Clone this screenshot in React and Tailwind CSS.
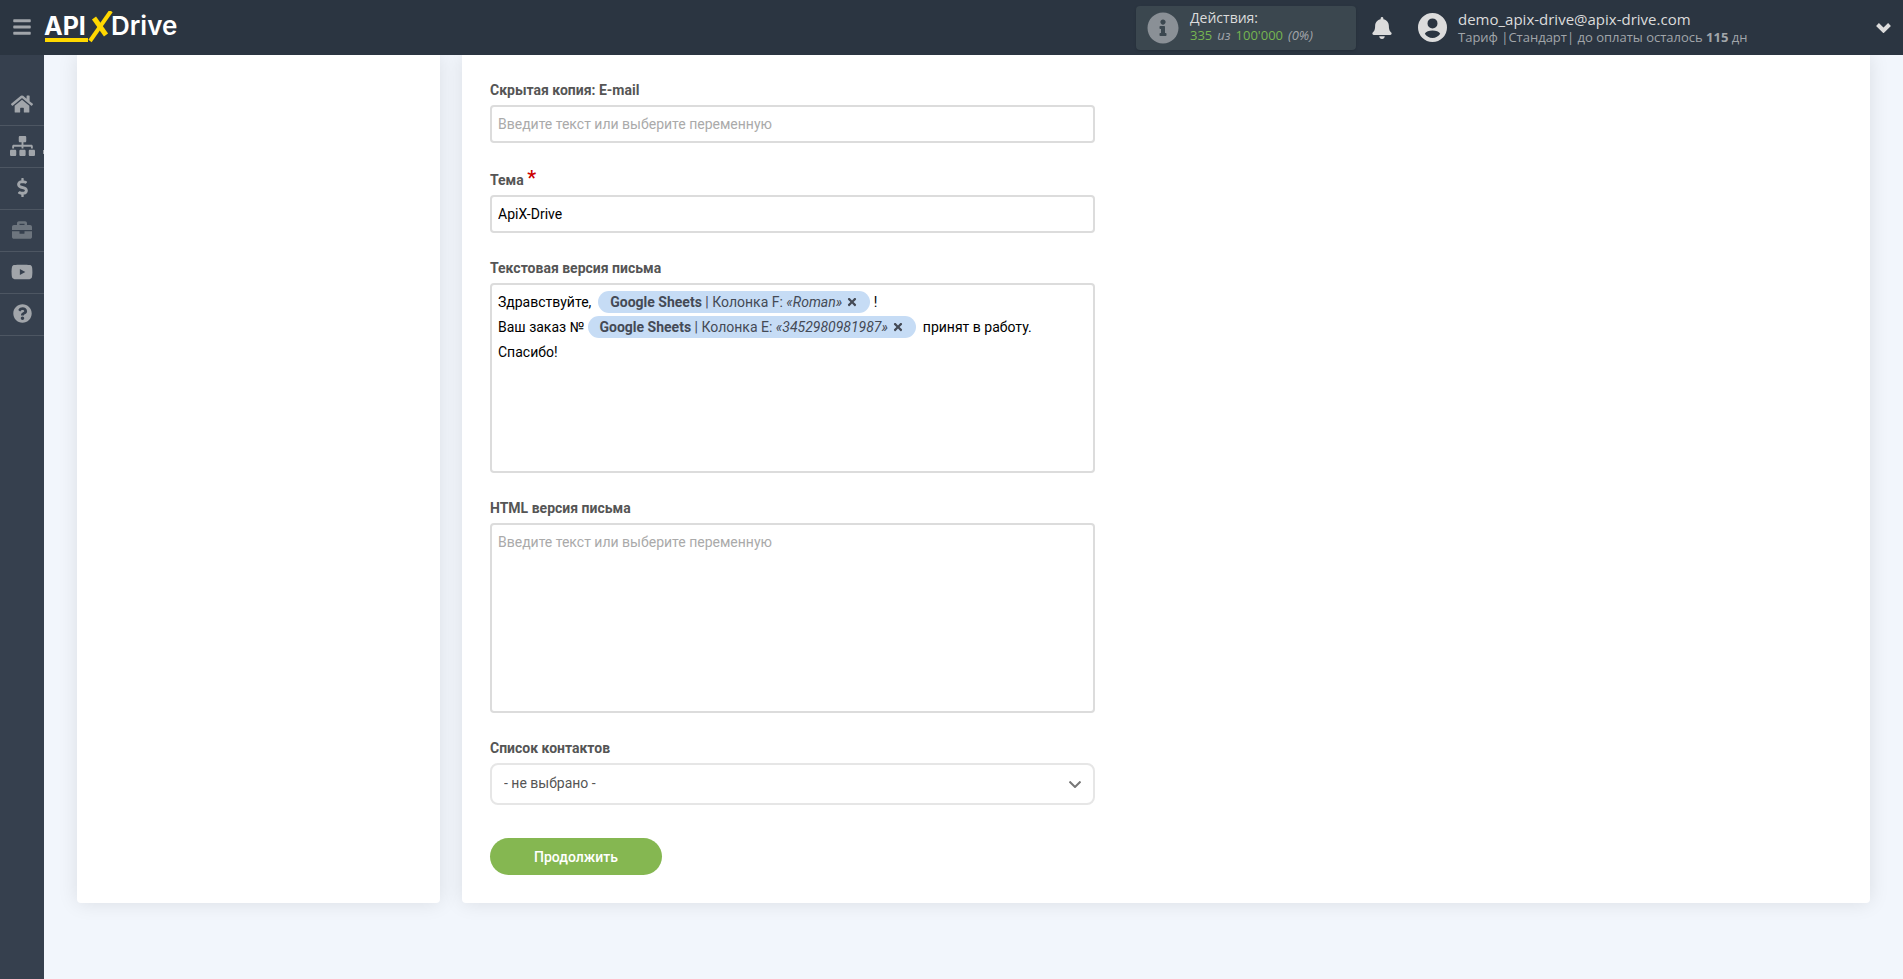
import {
	FaBars,
	FaHome,
	FaSitemap,
	FaDollarSign,
	FaBriefcase,
	FaYoutube,
	FaQuestionCircle,
	FaInfoCircle,
	FaBell,
	FaTimes,
} from "react-icons/fa";

const NAV_ITEMS = [
	{label: "Главная", icon: FaHome, size: "h-[22px] w-[22px]"},
	{label: "Связи", icon: FaSitemap, size: "h-5 w-[25px]", marker: true},
	{label: "Оплата", icon: FaDollarSign, size: "h-[19px] w-[19px]"},
	{label: "Кейсы", icon: FaBriefcase, size: "h-5 w-5", muted: true},
	{label: "Видео", icon: FaYoutube, size: "h-[22px] w-[22px]"},
	{label: "Помощь", icon: FaQuestionCircle, size: "h-[19px] w-[19px]"},
];

const PLACEHOLDER = "Введите текст или выберите переменную";

const INPUT_CLASS =
	"block w-full rounded border-2 border-[#dcdcdc] bg-white px-1.5 text-sm text-black outline-none placeholder:text-[#aaaaaa]";

function Logo() {
	return (
		<svg
			viewBox="0 0 136 32"
			className="h-8 w-[136px]"
			role="img"
			aria-label="ApiX-Drive"
		>
			<g fill="#ffffff" fontFamily="Inter, sans-serif" fontSize="25" fontWeight="700">
				<text x="0" y="24">API</text>
				<text x="67" y="24" fontSize="26" fontWeight="600">Drive</text>
			</g>
			<g stroke="#ffd800" fill="none">
				<path d="M1 29h43" strokeWidth="4" />
				<path d="M46 30L67 0" strokeWidth="4" />
				<path d="M50 7l12 17" strokeWidth="5" />
			</g>
		</svg>
	);
}

function UserIcon() {
	return (
		<svg viewBox="0 0 29 29" className="h-[29px] w-[29px]" fill="currentColor">
			<path
				fillRule="evenodd"
				d="M14.500 0a14.500 14.500 0 1 1 0 29a14.500 14.500 0 1 1 0-29zM14.500 5.400a5 5 0 1 0 0 10a5 5 0 1 0 0-10zM6.800 20.800C8 18.800 11 17.600 14.500 17.600S21 18.800 22.200 20.800C20.500 23.500 17.800 25 14.500 25S8.500 23.500 6.800 20.800z"
			/>
		</svg>
	);
}

function Header() {
	return (
		<header className="relative z-10 flex h-[55px] shrink-0 items-center bg-[#2b3541] font-['Open_Sans','Noto_Sans',sans-serif]">
			<button type="button" aria-label="Меню" className="ml-3 pb-0.5 text-[#a1a5aa]">
				<FaBars className="h-5 w-5" />
			</button>
			<a href="#" className="ml-3 pb-0.5">
				<Logo />
			</a>

			<div className="ml-auto flex h-11 w-[220px] items-center rounded bg-[#3b474f] pl-[11px] shadow">
				<FaInfoCircle className="h-8 w-8 text-[#8a9096]" />
				<div className="ml-[11px] pb-0.5 text-[#dcdcdc]">
					<div className="text-sm leading-[18px]">Действия:</div>
					<div className="flex gap-[5px] text-[13px] leading-[17px]">
						<span className="text-[#76b551]">335</span>
						<i className="text-[#a1a5aa]">из</i>
						<span className="text-[#76b551]">100'000</span>
						<i className="text-[#a1a5aa]">(0%)</i>
					</div>
				</div>
			</div>

			<button type="button" aria-label="Уведомления" className="ml-[15px] text-[#dcdcdc]">
				<FaBell className="h-[22px] w-[22px]" />
			</button>

			<button
				type="button"
				className="ml-[25px] flex w-[485px] items-center text-left text-[#dcdcdc]"
			>
				<UserIcon />
				<span className="ml-[11px] flex flex-col">
					<span className="text-[15px] leading-[18px]">
						demo_apix-drive@apix-drive.com
					</span>
					<span className="text-[13px] leading-[18px] text-[#a1a5aa]">
						Тариф |Стандарт| до оплаты осталось <b>115</b> дн
					</span>
				</span>
				<svg
					viewBox="0 0 15 10"
					className="mr-3 ml-auto h-[10px] w-[15px]"
					fill="none"
					stroke="currentColor"
					strokeWidth="4"
				>
					<path d="M1.500 1.500l6 6l6-6" />
				</svg>
			</button>
		</header>
	);
}

function Sidebar() {
	return (
		<nav className="w-11 shrink-0 bg-[#36404e] pt-[29px]">
			{NAV_ITEMS.map(({label, icon: Icon, size, muted, marker}) => (
				<a
					key={label}
					href="#"
					aria-label={label}
					className={`relative flex h-[42px] items-center justify-center border-b border-[#4d5662] pb-0.5 ${
						muted ? "text-[#6d757e]" : "text-[#a1a5aa]"
					}`}
				>
					<Icon className={size} />
					{marker && (
						<span className="absolute top-6 right-0 h-1 w-px bg-[#a1a5aa]" />
					)}
				</a>
			))}
		</nav>
	);
}

function Variable({column, value}) {
	return (
		<span
			contentEditable={false}
			className="inline-block rounded-full bg-[#c6dcf5] px-3 leading-[22px] text-[#444a55]"
		>
			<b>Google Sheets</b> | Колонка {column}: <i>«{value}»</i>
			<button type="button" aria-label="Удалить" className="ml-1 align-[-1px]">
				<FaTimes className="h-3 w-3" />
			</button>
		</span>
	);
}

function Label({children, ...props}) {
	return (
		<label
			className="mb-[5px] block text-sm leading-5 font-bold text-[#555555]"
			{...props}
		>
			{children}
		</label>
	);
}

function MailForm() {
	return (
		<form className="w-full max-w-[605px]" onSubmit={(e) => e.preventDefault()}>
			<div className="mb-[25px]">
				<Label htmlFor="bcc">Скрытая копия: E-mail</Label>
				<input
					id="bcc"
					type="text"
					placeholder={PLACEHOLDER}
					className={`${INPUT_CLASS} h-[38px]`}
				/>
			</div>

			<div className="mb-[25px]">
				<Label htmlFor="subject">
					Тема <span className="text-xl leading-5 font-medium text-[#cc0000]">*</span>
				</Label>
				<input
					id="subject"
					type="text"
					defaultValue="ApiX-Drive"
					className={`${INPUT_CLASS} h-[38px]`}
				/>
			</div>

			<div className="mb-[25px]">
				<Label id="text-label">Текстовая версия письма</Label>
				<div
					role="textbox"
					aria-multiline="true"
					aria-labelledby="text-label"
					contentEditable
					suppressContentEditableWarning
					className={`${INPUT_CLASS} h-[190px] pt-[5px] leading-[25px]`}
				>
					<div>
						Здравствуйте, &nbsp;<Variable column="F" value="Roman" /> !
					</div>
					<div>
						Ваш заказ № <Variable column="E" value="3452980981987" />
						&nbsp; принят в работу.
					</div>
					<div>Спасибо!</div>
				</div>
			</div>

			<div className="mb-[25px]">
				<Label htmlFor="html">HTML версия письма</Label>
				<textarea
					id="html"
					placeholder={PLACEHOLDER}
					className={`${INPUT_CLASS} h-[190px] resize-none pt-[5px] leading-[25px]`}
				/>
			</div>

			<div className="mb-[33px]">
				<Label htmlFor="contacts">Список контактов</Label>
				<div className="relative">
					<select
						id="contacts"
						className="block h-[42px] w-full appearance-none rounded-lg border-2 border-[#e6e6e6] bg-white px-3 pb-0.5 text-sm text-[#555555] outline-none"
					>
						<option>- не выбрано -</option>
					</select>
					<svg
						viewBox="0 0 12 7"
						className="pointer-events-none absolute top-[18px] right-[14px] h-[7px] w-3"
						fill="none"
						stroke="#777777"
						strokeWidth="2"
					>
						<path d="M0.500 0.500L6 6l5.500-5.500" />
					</svg>
				</div>
			</div>

			<button
				type="submit"
				className="block h-[37px] w-[172px] rounded-full bg-[#85b751] text-sm font-medium text-white"
			>
				Продолжить
			</button>
		</form>
	);
}

export default function App() {
	return (
		<div className="flex min-h-screen flex-col bg-[#f2f6fc] font-[Roboto,sans-serif]">
			<Header />
			<div className="flex flex-1">
				<Sidebar />
				<main className="flex flex-1 gap-[22px] px-[33px] pb-[76px]">
					<aside className="w-[363px] shrink-0 rounded-b bg-white shadow-[0_0_20px_rgba(0,0,0,0.1)]" />
					<section className="flex-1 rounded-b bg-white px-7 pt-[25px] pb-7 shadow-[0_0_20px_rgba(0,0,0,0.1)]">
						<MailForm />
					</section>
				</main>
			</div>
		</div>
	);
}
